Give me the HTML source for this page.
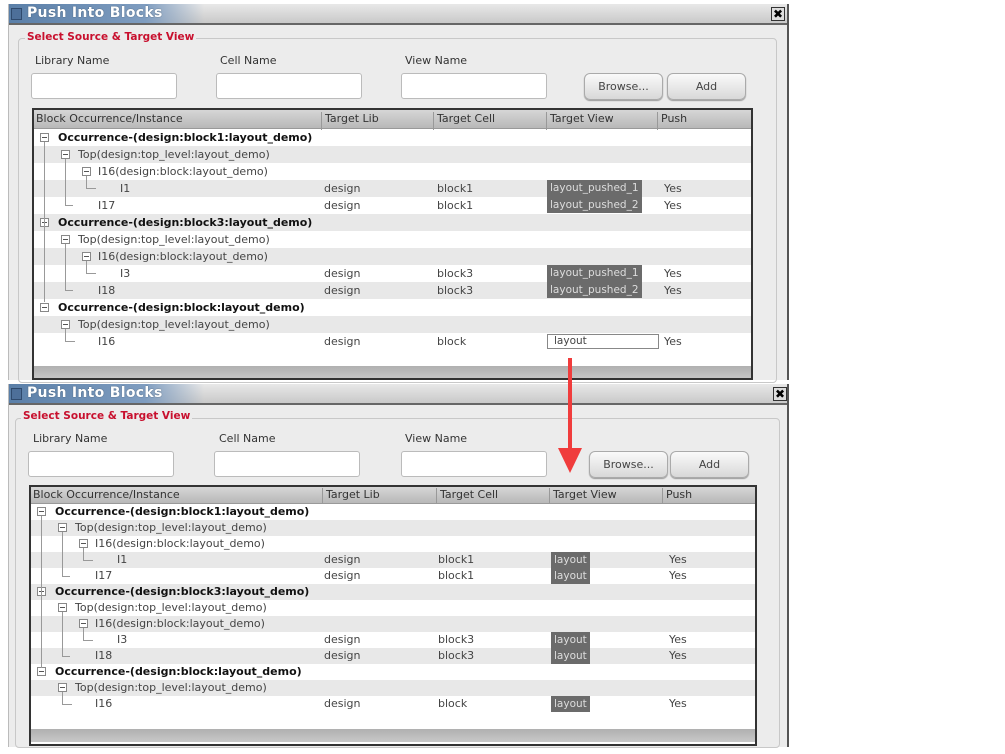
<!DOCTYPE html>
<html><head><meta charset="utf-8"><style>
*{margin:0;padding:0;box-sizing:border-box}
body{width:1005px;height:754px;background:#fff;position:relative;overflow:hidden;font-family:"DejaVu Sans","Liberation Sans",sans-serif;font-size:11px;color:#444}
.a{position:absolute}
.panel{position:absolute;background:#ececec;border-right:2px solid #555;border-left:1px solid #bbb}
.title{position:absolute;left:0;right:0;top:0;height:21px;background:linear-gradient(#e8e8e8,#c9c9c9);border-bottom:2px solid #666}
.tblue{position:absolute;left:0;top:0;height:19px;width:195px;background:linear-gradient(90deg,#5a7fa8,#7f9dc0 70%,rgba(160,180,205,0));}
.ttext{position:absolute;left:18px;top:1px;color:#fff;font-weight:bold;font-size:14px;letter-spacing:.3px;text-shadow:0 0 1px #345}
.ticon{position:absolute;left:2px;top:4px;width:11px;height:12px;background:#4d6f99;border:1px solid #2f4a6d}
.close{position:absolute;top:3px;width:14px;height:14px;border:1px solid #333;background:#ddd;font-size:12px;line-height:12px;text-align:center;font-weight:bold;color:#000}
.grp{position:absolute;border:1px solid #c8c8c8;border-radius:4px}
.red{position:absolute;color:#c8102e;font-weight:bold;font-size:10.5px;background:#ececec;padding:0 2px}
.lbl{position:absolute;color:#333;font-size:11px}
.inp{position:absolute;background:#fff;border:1px solid #bbb;border-radius:3px;height:26px;width:146px}
.btn{position:absolute;height:27px;width:79px;border:1px solid #aaa;border-radius:6px;background:linear-gradient(#fafafa,#d8d8d8);text-align:center;line-height:25px;color:#444;box-shadow:0 1px 1px #999}
.tbl{position:absolute;background:#fff;border:2px solid #333;overflow:hidden}
.hdr{position:absolute;left:0;right:0;top:0;background:linear-gradient(#d6d6d6,#b8b8b8);border-bottom:1px solid #999}
.hdr span{position:absolute;top:2px;color:#333;padding-left:3px;border-left:1px solid #999;height:100%}
.r{position:absolute;left:0;right:0}
.g{background:#e8e8e8}
.r span{position:absolute;top:2px;white-space:nowrap}
.b{font-weight:bold;color:#111}
.mb{position:absolute;width:9px;height:9px;border:1px solid #888;background:#fff}
.mb:after{content:"";position:absolute;left:1px;top:3px;width:5px;height:1px;background:#555}
.vl{position:absolute;border-left:1px solid #999}
.hl{position:absolute;border-top:1px solid #999;width:8px}
.sel{position:absolute;background:#6b6b6b;color:#ddd;padding:0 3px;font-size:10.5px;white-space:nowrap}
.sb{position:absolute;left:0;right:0;height:13px;background:linear-gradient(#b0b0b0,#c8c8c8)}
</style></head><body>

<!-- PANEL 1 -->
<div class="panel" style="left:8px;top:4px;width:781px;height:376px">
 <div class="title"><div class="tblue"></div><div class="ticon"></div><div class="ttext">Push Into Blocks</div><div class="close" style="left:762px">✖</div></div>
 <div class="grp" style="left:9px;top:34px;width:759px;height:345px"></div>
 <div class="red" style="left:16px;top:27px">Select Source &amp; Target View</div>
 <div class="lbl" style="left:26px;top:50px">Library Name</div>
 <div class="lbl" style="left:211px;top:50px">Cell Name</div>
 <div class="lbl" style="left:396px;top:50px">View Name</div>
 <div class="inp" style="left:22px;top:69px"></div>
 <div class="inp" style="left:207px;top:69px"></div>
 <div class="inp" style="left:392px;top:69px"></div>
 <div class="btn" style="left:575px;top:69px">Browse...</div>
 <div class="btn" style="left:658px;top:69px">Add</div>
</div>
<div class="tbl" style="left:32px;top:108px;width:721px;height:272px">
 <div class="hdr" style="height:19px"><span style="left:-1px;border:0">Block Occurrence/Instance</span><span style="left:287px">Target Lib</span><span style="left:399px">Target Cell</span><span style="left:512px">Target View</span><span style="left:623px">Push</span></div>
 <div style="position:absolute;left:0;top:19px;right:0">
  <div class="r" style="top:0;height:17px"><div class="mb" style="left:6px;top:4px"></div><span class="b" style="left:24px">Occurrence-(design:block1:layout_demo)</span></div>
  <div class="r g" style="top:17px;height:17px"><div class="mb" style="left:27px;top:4px"></div><span style="left:44px">Top(design:top_level:layout_demo)</span></div>
  <div class="r" style="top:34px;height:17px"><div class="mb" style="left:48px;top:4px"></div><span style="left:64px">I16(design:block:layout_demo)</span></div>
  <div class="r g" style="top:51px;height:17px"><span style="left:86px">I1</span><span style="left:290px">design</span><span style="left:403px">block1</span><div class="sel" style="left:513px;top:0;height:17px;line-height:17px">layout_pushed_1</div><span style="left:630px">Yes</span></div>
  <div class="r" style="top:68px;height:17px"><span style="left:64px">I17</span><span style="left:290px">design</span><span style="left:403px">block1</span><div class="sel" style="left:513px;top:0;height:16px;line-height:16px">layout_pushed_2</div><span style="left:630px">Yes</span></div>
  <div class="r g" style="top:85px;height:17px"><div class="mb" style="left:6px;top:4px"></div><span class="b" style="left:24px">Occurrence-(design:block3:layout_demo)</span></div>
  <div class="r" style="top:102px;height:17px"><div class="mb" style="left:27px;top:4px"></div><span style="left:44px">Top(design:top_level:layout_demo)</span></div>
  <div class="r g" style="top:119px;height:17px"><div class="mb" style="left:48px;top:4px"></div><span style="left:64px">I16(design:block:layout_demo)</span></div>
  <div class="r" style="top:136px;height:17px"><span style="left:86px">I3</span><span style="left:290px">design</span><span style="left:403px">block3</span><div class="sel" style="left:513px;top:0;height:17px;line-height:17px">layout_pushed_1</div><span style="left:630px">Yes</span></div>
  <div class="r g" style="top:153px;height:17px"><span style="left:64px">I18</span><span style="left:290px">design</span><span style="left:403px">block3</span><div class="sel" style="left:513px;top:0;height:16px;line-height:16px">layout_pushed_2</div><span style="left:630px">Yes</span></div>
  <div class="r" style="top:170px;height:17px"><div class="mb" style="left:6px;top:4px"></div><span class="b" style="left:24px">Occurrence-(design:block:layout_demo)</span></div>
  <div class="r g" style="top:187px;height:17px"><div class="mb" style="left:27px;top:4px"></div><span style="left:44px">Top(design:top_level:layout_demo)</span></div>
  <div class="r" style="top:204px;height:17px"><span style="left:64px">I16</span><span style="left:290px">design</span><span style="left:403px">block</span><div style="position:absolute;left:513px;top:1px;width:112px;height:15px;border:1px solid #888;background:#fff;padding-left:6px;line-height:13px;color:#444;font-size:10.5px">layout</div><span style="left:630px">Yes</span></div>
  <div class="vl" style="left:10px;top:13px;height:160px"></div>
  <div class="vl" style="left:31px;top:30px;height:47px"></div><div class="hl" style="left:31px;top:76px"></div>
  <div class="vl" style="left:52px;top:47px;height:13px"></div><div class="hl" style="left:52px;top:59px;width:10px"></div>
  <div class="vl" style="left:31px;top:115px;height:47px"></div><div class="hl" style="left:31px;top:161px"></div>
  <div class="vl" style="left:52px;top:132px;height:13px"></div><div class="hl" style="left:52px;top:144px;width:10px"></div>
  <div class="vl" style="left:31px;top:200px;height:13px"></div><div class="hl" style="left:31px;top:212px;width:10px"></div>
 </div>
 <div class="sb" style="top:256px"></div>
</div>

<!-- PANEL 2 -->
<div class="panel" style="left:8px;top:384px;width:781px;height:363px">
 <div class="title"><div class="tblue"></div><div class="ticon"></div><div class="ttext">Push Into Blocks</div><div class="close" style="left:764px">✖</div></div>
 <div class="grp" style="left:6px;top:34px;width:765px;height:330px"></div>
 <div class="red" style="left:12px;top:26px">Select Source &amp; Target View</div>
 <div class="lbl" style="left:24px;top:48px">Library Name</div>
 <div class="lbl" style="left:210px;top:48px">Cell Name</div>
 <div class="lbl" style="left:396px;top:48px">View Name</div>
 <div class="inp" style="left:19px;top:67px"></div>
 <div class="inp" style="left:205px;top:67px"></div>
 <div class="inp" style="left:392px;top:67px"></div>
 <div class="btn" style="left:580px;top:67px">Browse...</div>
 <div class="btn" style="left:661px;top:67px">Add</div>
</div>
<div class="tbl" style="left:29px;top:485px;width:728px;height:261px">
 <div class="hdr" style="height:17px"><span style="left:-1px;top:1px;border:0">Block Occurrence/Instance</span><span style="left:291px;top:1px">Target Lib</span><span style="left:405px;top:1px">Target Cell</span><span style="left:518px;top:1px">Target View</span><span style="left:631px;top:1px">Push</span></div>
 <div style="position:absolute;left:0;top:17px;right:0">
  <div class="r" style="top:0;height:16px"><div class="mb" style="left:6px;top:3px"></div><span class="b" style="left:24px;top:1px">Occurrence-(design:block1:layout_demo)</span></div>
  <div class="r g" style="top:16px;height:16px"><div class="mb" style="left:27px;top:3px"></div><span style="left:44px;top:1px">Top(design:top_level:layout_demo)</span></div>
  <div class="r" style="top:32px;height:16px"><div class="mb" style="left:48px;top:3px"></div><span style="left:64px;top:1px">I16(design:block:layout_demo)</span></div>
  <div class="r g" style="top:48px;height:16px"><span style="left:86px;top:1px">I1</span><span style="left:293px;top:1px">design</span><span style="left:407px;top:1px">block1</span><div class="sel" style="left:520px;top:0;height:16px;line-height:16px">layout</div><span style="left:638px;top:1px">Yes</span></div>
  <div class="r" style="top:64px;height:16px"><span style="left:64px;top:1px">I17</span><span style="left:293px;top:1px">design</span><span style="left:407px;top:1px">block1</span><div class="sel" style="left:520px;top:0;height:16px;line-height:16px">layout</div><span style="left:638px;top:1px">Yes</span></div>
  <div class="r g" style="top:80px;height:16px"><div class="mb" style="left:6px;top:3px"></div><span class="b" style="left:24px;top:1px">Occurrence-(design:block3:layout_demo)</span></div>
  <div class="r" style="top:96px;height:16px"><div class="mb" style="left:27px;top:3px"></div><span style="left:44px;top:1px">Top(design:top_level:layout_demo)</span></div>
  <div class="r g" style="top:112px;height:16px"><div class="mb" style="left:48px;top:3px"></div><span style="left:64px;top:1px">I16(design:block:layout_demo)</span></div>
  <div class="r" style="top:128px;height:16px"><span style="left:86px;top:1px">I3</span><span style="left:293px;top:1px">design</span><span style="left:407px;top:1px">block3</span><div class="sel" style="left:520px;top:0;height:16px;line-height:16px">layout</div><span style="left:638px;top:1px">Yes</span></div>
  <div class="r g" style="top:144px;height:16px"><span style="left:64px;top:1px">I18</span><span style="left:293px;top:1px">design</span><span style="left:407px;top:1px">block3</span><div class="sel" style="left:520px;top:0;height:16px;line-height:16px">layout</div><span style="left:638px;top:1px">Yes</span></div>
  <div class="r" style="top:160px;height:16px"><div class="mb" style="left:6px;top:3px"></div><span class="b" style="left:24px;top:1px">Occurrence-(design:block:layout_demo)</span></div>
  <div class="r g" style="top:176px;height:16px"><div class="mb" style="left:27px;top:3px"></div><span style="left:44px;top:1px">Top(design:top_level:layout_demo)</span></div>
  <div class="r" style="top:192px;height:16px"><span style="left:64px;top:1px">I16</span><span style="left:293px;top:1px">design</span><span style="left:407px;top:1px">block</span><div class="sel" style="left:520px;top:0;height:16px;line-height:16px">layout</div><span style="left:638px;top:1px">Yes</span></div>
  <div class="vl" style="left:10px;top:12px;height:152px"></div>
  <div class="vl" style="left:31px;top:28px;height:44px"></div><div class="hl" style="left:31px;top:72px"></div>
  <div class="vl" style="left:52px;top:44px;height:12px"></div><div class="hl" style="left:52px;top:56px;width:10px"></div>
  <div class="vl" style="left:31px;top:108px;height:44px"></div><div class="hl" style="left:31px;top:152px"></div>
  <div class="vl" style="left:52px;top:124px;height:12px"></div><div class="hl" style="left:52px;top:136px;width:10px"></div>
  <div class="vl" style="left:31px;top:188px;height:12px"></div><div class="hl" style="left:31px;top:200px;width:10px"></div>
 </div>
 <div class="sb" style="top:242px"></div>
</div>

<!-- red arrow -->
<div class="a" style="left:568px;top:358px;width:4px;height:95px;background:#f03c3c"></div>
<svg class="a" style="left:558px;top:448px" width="24" height="26"><polygon points="0,0 24,0 12,25" fill="#f03c3c"/></svg>
</body></html>
